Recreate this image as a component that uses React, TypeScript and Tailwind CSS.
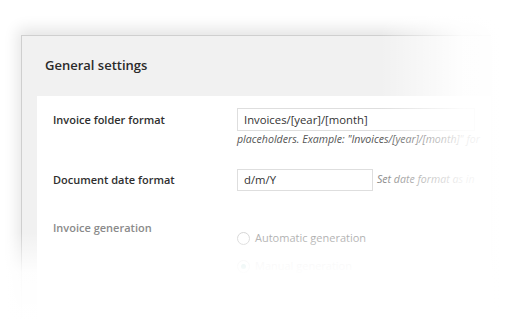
import React from "react";

export default function App() {
  const font = { fontFamily: '"Open Sans", "Noto Sans", sans-serif' };
  return (
    <div className="relative w-[530px] h-[322px] overflow-hidden bg-white" style={font}>
      <div className="pt-[35px] pl-[21px]">
        <div className="w-[470px] h-[300px] bg-[#f1f1f1] border-t border-l border-[#cfcfcf] shadow-[-3px_-6px_14px_rgba(0,0,0,0.11)]">
          <div className="h-[60px] flex items-center pl-[23px]">
            <span className="text-[13px] font-semibold text-[#2a2a2a]">General settings</span>
          </div>
          <div className="ml-[15px] bg-white h-[240px] pt-[12px]">
            <div className="flex">
              <div className="w-[200px] pl-[16px] text-[11px] font-semibold leading-[23px] text-[#2f2f2f]">Invoice folder format</div>
              <div>
                <div className="w-[238px] h-[23px] border border-[#dedede] pl-[6px] text-[11.3px] leading-[21px] text-[#333]">Invoices/[year]/[month]</div>
                <div className="text-[10.6px] italic leading-[14px] mt-[1px] text-[#555] whitespace-nowrap">placeholders. Example: "Invoices/[year]/[month]" for</div>
              </div>
            </div>
            <div className="flex mt-[23px]">
              <div className="w-[200px] pl-[16px] text-[11px] font-semibold leading-[22px] text-[#2f2f2f]">Document date format</div>
              <div className="flex items-center">
                <div className="w-[136px] h-[22px] border border-[#dedede] pl-[6px] text-[11.3px] leading-[20px] text-[#333]">d/m/Y</div>
                <span className="ml-[4px] text-[10.6px] italic text-[#888] whitespace-nowrap">Set date format as in</span>
              </div>
            </div>
            <div className="flex mt-[28px]">
              <div className="w-[200px] pl-[16px] text-[11px] font-semibold leading-[18px] text-[#8a8a8a]">Invoice generation</div>
              <div className="pt-[10px]">
                <div className="flex items-center h-[18px]">
                  <span className="w-[13px] h-[13px] rounded-full border border-[#d6d6d6] bg-white" />
                  <span className="ml-[5px] text-[11px] text-[#a8a8a8]">Automatic generation</span>
                </div>
                <div className="flex items-center h-[18px] mt-[10px]">
                  <span className="w-[13px] h-[13px] rounded-full border border-[#eeeeee] bg-white flex items-center justify-center">
                    <span className="w-[5px] h-[5px] rounded-full bg-[#c8e4e2]" />
                  </span>
                  <span className="ml-[5px] text-[11px] text-[#ececec]">Manual generation</span>
                </div>
              </div>
            </div>
          </div>
        </div>
      </div>
      <div className="absolute top-0 left-[380px] w-[150px] h-full bg-gradient-to-r from-transparent via-white/90 via-55% to-white" />
      <div className="absolute left-0 bottom-0 w-full h-[90px] bg-gradient-to-b from-transparent via-white/90 via-45% to-white" />
    </div>
  );
}
